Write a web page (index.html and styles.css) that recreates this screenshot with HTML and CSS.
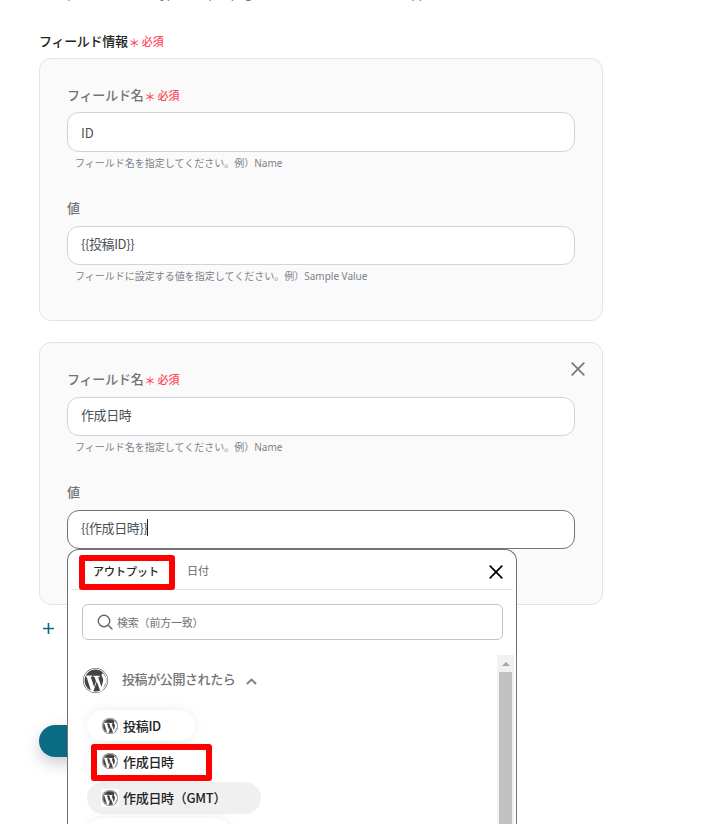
FILE: index.html
```html
<!DOCTYPE html>
<html lang="ja">
<head>
  <meta charset="UTF-8" />
  <meta name="viewport" content="width=device-width, initial-scale=1.0" />
  <title>フィールド情報</title>
  <link rel="stylesheet" href="styles.css">
</head>
<body>
  <svg width="0" height="0" class="defs">
    <symbol id="wp" viewBox="0 0 24 24">
      <circle cx="12" cy="12" r="12" fill="#464342" />
      <circle cx="12" cy="12" r="11" fill="none" stroke="#fff" stroke-width="1" />
      <path fill="#fff" d="M3.3 7.2h5.6v1l-1.5.2 3.3 9.8 1.8-5.5-1.4-4-1.2-.3v-1h6.2v1l-1.6.2 3.2 9.7 1.1-3.8c1.1-3.3.4-4.4-.4-5.8-.9-1.5-.7-3.1.8-3.6l3 4.1.4 4-4.1 8.5-1.8.6-3.5-9.4-3.3 9.7-2.2-.5L3.4 8.4l-1.1-.2z" />
    </symbol>
    <symbol id="close" viewBox="0 0 14 14">
      <path d="M1.2 1.2L12.8 12.8M12.8 1.2L1.2 12.8" fill="none" stroke="currentColor" stroke-width="1.7" stroke-linecap="round" />
    </symbol>
  </svg>

  <p class="description">Set up the fields in a type and per page with no other data in the app</p>

  <main class="form">
    <div class="form-title">フィールド情報<span class="required"><i>＊</i>必須</span></div>

    <section class="card">
      <div class="label">フィールド名<span class="required"><i>＊</i>必須</span></div>
      <div class="input latin">ID</div>
      <div class="hint">フィールド名を指定してください。例）Name</div>
      <div class="label second">値</div>
      <div class="input">{{投稿ID}}</div>
      <div class="hint">フィールドに設定する値を指定してください。例）Sample Value</div>
    </section>

    <section class="card">
      <button class="card-close"><svg><use href="#close" /></svg></button>
      <div class="label tall">フィールド名<span class="required"><i>＊</i>必須</span></div>
      <div class="input">作成日時</div>
      <div class="hint">フィールド名を指定してください。例）Name</div>
      <div class="label second">値</div>
      <div class="input focused">{{作成日時}}<span class="caret"></span>

        <div class="menu">
          <div class="tabs">
            <span class="tab active">アウトプット</span>
            <span class="tab">日付</span>
            <button class="menu-close"><svg><use href="#close" /></svg></button>
          </div>
          <div class="search">
            <svg viewBox="0 0 16 16"><circle cx="7" cy="7" r="5.7" /><path d="M11.2 11.2L15 15" /></svg>
            検索（前方一致）
          </div>
          <div class="results">
            <div class="list">
              <div class="group">
                <svg class="group-icon"><use href="#wp" /></svg>
                <span>投稿が公開されたら</span>
                <svg class="chevron" viewBox="0 0 10 6"><path d="M0.8 5.2L5 1.2L9.2 5.2" /></svg>
              </div>
              <div class="chip"><span class="logo"><svg><use href="#wp" /></svg></span>投稿ID</div>
              <div class="chip marked"><span class="logo"><svg><use href="#wp" /></svg></span>作成日時</div>
              <div class="chip hover"><span class="logo"><svg><use href="#wp" /></svg></span>作成日時（GMT）</div>
              <div class="chip next"></div>
            </div>
            <div class="scrollbar"><span class="arrow"></span><span class="thumb"></span></div>
          </div>
        </div>
      </div>
    </section>

    <button class="add"><svg viewBox="0 0 12 12"><path d="M6 0V12M0 6H12" /></svg></button>
    <button class="submit"></button>
  </main>
</body>
</html>
```

FILE: styles.css
```css
* {
  box-sizing: border-box;
}

body {
  margin: 0;
  height: 824px;
  overflow: hidden;
  background: #fff;
  font-family: "Noto Sans CJK JP", sans-serif;
  color: #222;
}

button {
  display: block;
  padding: 0;
  border: none;
  background: none;
}

svg {
  display: block;
}

.defs {
  position: absolute;
}

.description {
  height: 32px;
  margin: -17px 0 0;
  padding-left: 39px;
  font-family: "Noto Sans", sans-serif;
  font-size: 12px;
  line-height: 21px;
  color: #6b7280;
  white-space: nowrap;
}

.form {
  width: 564px;
  margin: 16px 0 0 39px;
}

.form-title {
  height: 27px;
  font-size: 13px;
  line-height: 20px;
  font-weight: 500;
  letter-spacing: -0.3px;
}

.required {
  display: inline-block;
  margin-left: 1px;
  font-size: 11px;
  font-weight: 500;
  letter-spacing: 0;
  color: #ff4759;
}

.required i {
  position: relative;
  top: 1px;
  font-style: normal;
  margin-right: 2px;
}

.card {
  position: relative;
  height: 263px;
  margin-bottom: 21px;
  padding: 26px 27px 0;
  border: 1px solid #e3e3e3;
  border-radius: 12px;
  background: #fafafa;
}

.label {
  height: 27px;
  font-size: 13px;
  line-height: 20px;
  font-weight: 500;
  letter-spacing: -0.2px;
  color: #737373;
}

.label.tall {
  height: 28px;
}

.label.second {
  height: 28px;
  margin-top: 24px;
}

.input {
  position: relative;
  height: 39px;
  padding: 0 13px;
  border: 1px solid #ced4da;
  border-radius: 12px;
  background: #fff;
  font-size: 13px;
  line-height: 34px;
  letter-spacing: -0.4px;
  color: #495057;
}

.input.latin {
  height: 40px;
  line-height: 40px;
  letter-spacing: 0;
}

.hint {
  height: 22px;
  padding-left: 8px;
  font-family: "Noto Sans", "Noto Sans CJK JP", sans-serif;
  font-size: 10px;
  line-height: 22px;
  color: #7a828a;
}

.input.focused {
  border-color: #737373;
}

.caret {
  display: inline-block;
  width: 1px;
  height: 17px;
  vertical-align: -3px;
  background: #222;
}

.card-close {
  position: absolute;
  top: 19px;
  right: 17px;
  color: #777;
}

.card-close svg,
.menu-close svg {
  width: 14px;
  height: 14px;
}

.menu {
  position: absolute;
  top: 38px;
  left: -1px;
  z-index: 2;
  width: 450px;
  height: 275px;
  padding: 0 3px;
  overflow: hidden;
  border: 1px solid #737373;
  border-bottom: none;
  border-radius: 12px 12px 0 0;
  background: #fff;
  letter-spacing: 0;
}

.tabs {
  display: flex;
  align-items: center;
  height: 40px;
  padding-left: 8px;
  border-bottom: 1px solid #e3e3e3;
  font-size: 11px;
  line-height: 16px;
}

.tab {
  padding: 0 20px 0 12px;
  color: #666;
}

.tab.active {
  display: flex;
  align-items: center;
  height: 35px;
  width: 96px;
  margin-top: 6px;
  padding: 0 0 4px 8px;
  border: 6px solid #f00;
  border-radius: 3px;
  font-weight: 500;
  color: #222;
}

.menu-close {
  margin: 5px 10px 0 auto;
  color: #000;
}

.search {
  display: flex;
  align-items: center;
  gap: 4px;
  width: 421px;
  height: 36px;
  margin: 14px 0 0 11px;
  padding-left: 14px;
  border: 1px solid #c4c4c4;
  border-radius: 6px;
  font-size: 11px;
  line-height: 36px;
  letter-spacing: -0.2px;
  color: #737373;
}

.search svg {
  width: 16px;
  height: 16px;
  fill: none;
  stroke: #666;
  stroke-width: 1.4;
  stroke-linecap: round;
}

.results {
  display: flex;
  justify-content: space-between;
  height: 169px;
  margin-top: 15px;
}

.list {
  padding-left: 12px;
}

.group {
  display: flex;
  align-items: center;
  height: 50px;
  margin-bottom: 5px;
  font-size: 13px;
  line-height: 34px;
  font-weight: 500;
  letter-spacing: -0.4px;
  color: #737373;
}

.group span {
  padding-bottom: 2px;
}

.group-icon {
  width: 25px;
  height: 25px;
  margin-right: 14px;
}

.chevron {
  width: 11px;
  height: 7px;
  margin: 3px 0 0 11px;
  fill: none;
  stroke: #808080;
  stroke-width: 1.8;
}

.chip {
  position: relative;
  display: flex;
  align-items: center;
  width: 108px;
  height: 31px;
  margin: 0 0 5px 4px;
  padding-left: 14px;
  border-radius: 16px;
  background: #fff;
  box-shadow: 0 0 12px rgba(0, 0, 0, 0.08);
  font-size: 13px;
  line-height: 31px;
  font-weight: 500;
  letter-spacing: -0.3px;
  color: #222;
}

.chip.marked {
  z-index: 1;
  width: 120px;
  padding-bottom: 1px;
}

/* red frame around the selected output */
.chip.marked::after {
  content: "";
  position: absolute;
  top: -2px;
  left: 4px;
  box-sizing: border-box;
  width: 121px;
  height: 37px;
  border: 6px solid #f00;
  border-radius: 3px;
}

.chip.hover {
  width: 174px;
  height: 32px;
  margin-bottom: 4px;
  padding-bottom: 1px;
  background: #f0f0f0;
  box-shadow: none;
}

.chip.next {
  width: 144px;
}

.logo {
  width: 18px;
  height: 18px;
  margin-right: 4px;
  padding: 1px;
  background: #fff;
}

.logo svg {
  width: 16px;
  height: 16px;
}

.scrollbar {
  display: flex;
  flex-direction: column;
  align-items: center;
  width: 17px;
  margin-right: -1px;
  background: #f1f1f1;
}

.arrow {
  height: 17px;
  padding-top: 7px;
}

.arrow::before {
  content: "";
  display: block;
  border: 4px solid transparent;
  border-top: 0;
  border-bottom-color: #a3a3a3;
}

.thumb {
  width: 13px;
  flex: 1;
  background: #c1c1c1;
}

.add {
  margin: -3px 0 0 4px;
}

.add svg {
  width: 11px;
  height: 11px;
  stroke: #0b6b85;
  stroke-width: 1.8;
}

.submit {
  width: 120px;
  height: 32px;
  margin-top: 91px;
  border-radius: 16px;
  background: #0b6b85;
  box-shadow: 0 6px 16px rgba(0, 0, 0, 0.2);
}
```
